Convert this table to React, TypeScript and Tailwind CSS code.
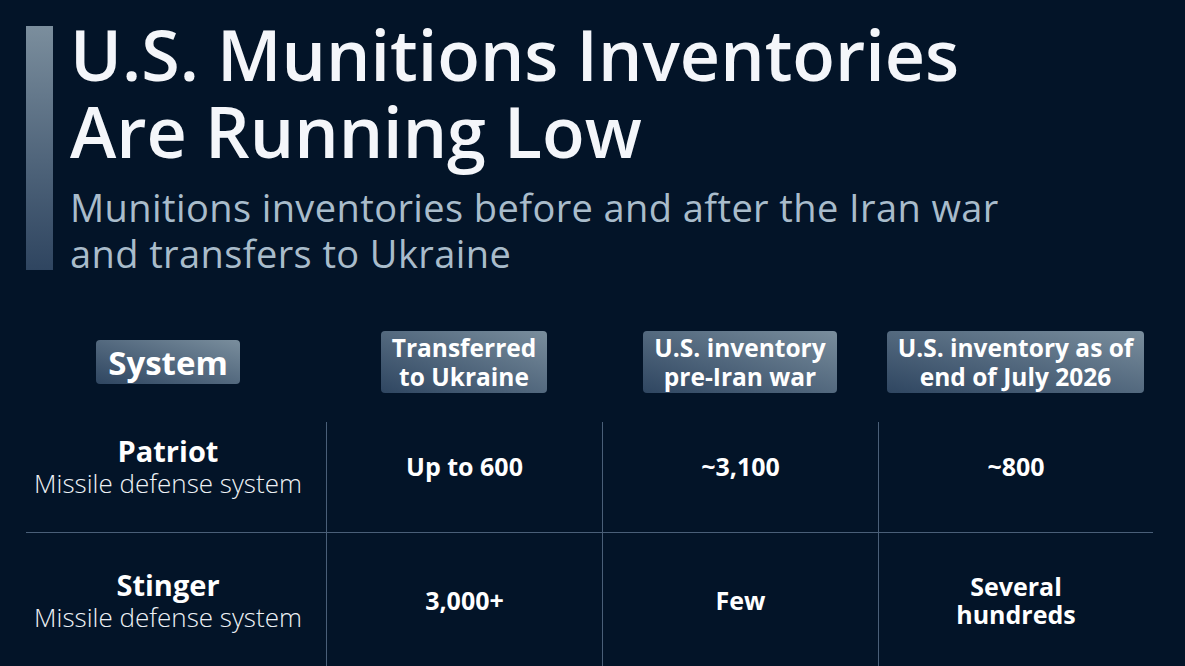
export default function App() {
  const rows = [
    { name: "Patriot", type: "Missile defense system", values: ["Up to 600", "~3,100", "~800"] },
    { name: "Stinger", type: "Missile defense system", values: ["3,000+", "Few", "Several\nhundreds"] },
  ]

  return (
    <div
      className="w-[1185px] h-[666px] overflow-hidden bg-[#031428] text-white"
      style={{ fontFamily: '"Open Sans", "Noto Sans", sans-serif' }}
    >
      {/* Heading block */}
      <div className="flex gap-[17px] pt-[26px] pl-[26px]">
        <div className="w-[27px] h-[244px] bg-gradient-to-b from-[#7b8e9d] to-[#2f4560]" />
        <div className="-mt-[10px]">
          <h1 className="text-[70px] leading-[77px] font-semibold text-[#f4f6fa]">
            U.S. Munitions Inventories
            <br />
            Are Running Low
          </h1>
          <p className="mt-[14px] text-[38px] leading-[46px] tracking-[0.4px] text-[#a9bccb]">
            Munitions inventories before and after the Iran war
            <br />
            and transfers to Ukraine
          </p>
        </div>
      </div>

      {/* Table */}
      <div className="mt-[55px] ml-[26px] w-[1127px]">
        <div className="grid grid-cols-[300px_276px_276px_275px] items-center h-[62px]">
          <div className="flex justify-center pr-[16px]">
            <span className="rounded-[4px] bg-gradient-to-tr from-[#2f4661] to-[#7a8e9d] px-[12px] h-[44px] flex items-center text-[33px] font-bold leading-none">
              System
            </span>
          </div>
          <HeaderPill text={["Transferred", "to Ukraine"]} />
          <HeaderPill text={["U.S. inventory", "pre-Iran war"]} />
          <HeaderPill text={["U.S. inventory as of", "end of July 2026"]} />
        </div>

        <div className="mt-[29px]">
          {rows.map((row, i) => (
            <div
              key={row.name}
              className={
                i === 0
                  ? "grid grid-cols-[300px_276px_276px_275px] h-[111px] border-b border-[#4a5f78]"
                  : "grid grid-cols-[300px_276px_276px_275px] h-[134px]"
              }
            >
              <div className={i === 0 ? "flex flex-col items-center justify-center pr-[16px] pb-[23px]" : "flex flex-col items-center justify-center pr-[16px]"}>
                <div className="text-[29px] font-bold leading-[34px]">{row.name}</div>
                <div className="text-[26px] leading-[30px] font-light text-[#eef2f6]">{row.type}</div>
              </div>
              {row.values.map((v) => (
                <div
                  key={v}
                  className={
                    i === 0
                      ? "flex items-center justify-center border-l border-[#4a5f78] pb-[23px] text-[25px] font-bold leading-[28px] text-center whitespace-pre-line"
                      : "flex items-center justify-center border-l border-[#4a5f78] text-[25px] font-bold leading-[28px] text-center whitespace-pre-line"
                  }
                >
                  {v}
                </div>
              ))}
            </div>
          ))}
        </div>
      </div>
    </div>
  )
}

function HeaderPill({ text }: { text: string[] }) {
  return (
    <div className="flex justify-center">
      <span className="rounded-[4px] bg-gradient-to-tr from-[#2f4661] to-[#7a8e9d] px-[11px] h-[62px] flex flex-col justify-center items-center text-[24.5px] font-bold leading-[29px]">
        {text.map((t) => (
          <span key={t}>{t}</span>
        ))}
      </span>
    </div>
  )
}
